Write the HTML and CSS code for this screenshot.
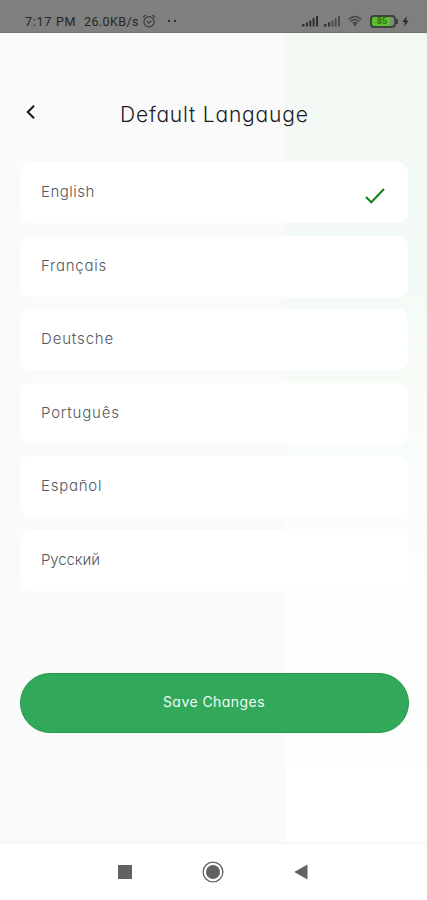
FILE: index.html
```html
<!DOCTYPE html>
<html lang="en">
<head>
	<meta charset="utf-8">
	<meta name="viewport" content="width=device-width, initial-scale=1">
	<title>Default Langauge</title>
	<link rel="stylesheet" href="styles.css">
</head>
<body>
<div class="app">
	<div class="status-bar">
		<span class="time">7:17 PM</span>
		<span class="speed">26.0KB/s</span>
		<svg class="alarm" width="14" height="14" viewBox="0 0 14 14" fill="none" stroke="#3c3c3c" stroke-width="1.2">
			<circle cx="7" cy="7.7" r="5.1"/>
			<path d="M1 3.3L3.7 1M13 3.3L10.3 1M4.8 7.2L6.8 9.2L9.4 6.6"/>
		</svg>
		<span class="dots"><i></i><i></i></span>
		<div class="status-icons">
			<svg width="17" height="12" viewBox="0 0 17 12" fill="#303030">
				<path d="M0 9h2.5v2.5H0zM4 7.5h2v4H4zM7.3 5.5h2v6h-2zM10.6 3.3h2v8.2h-2zM14 1h2v10.5h-2z"/>
			</svg>
			<svg class="signal2" width="17" height="12" viewBox="0 0 17 12" fill="#303030">
				<path d="M0 9h2.5v2.5H0zM4 7.5h2v4H4z"/>
				<path fill="#4d4d4d" d="M7.3 5.5h2v6h-2zM10.6 3.3h2v8.2h-2zM14 1h2v10.5h-2z"/>
			</svg>
			<svg class="wifi" width="14" height="12" viewBox="0 0 14 12" fill="none" stroke="#444" stroke-width="1.4">
				<path d="M.8 4.4Q7-1.5 13.2 4.4M2.8 6.5Q7 2.5 11.2 6.5M4.7 8.5Q7 6.4 9.3 8.5"/>
				<path fill="#444" stroke="none" d="M5.2 9L7 11.4L8.8 9Q7 7.8 5.2 9z"/>
			</svg>
			<div class="battery"><b>85</b></div>
			<svg class="bolt" width="7" height="11" viewBox="0 0 7 11" fill="#292929">
				<path d="M4.8 0L.4 6H3L1.8 11L6.7 4.6H4z"/>
			</svg>
		</div>
	</div>

	<div class="screen">
		<div class="header">
			<svg class="back" width="12" height="16" viewBox="0 0 12 16" fill="none" stroke="#17171d" stroke-width="2">
				<path d="M9 1.8L2.8 8L9 14.2"/>
			</svg>
			<h1>Default Langauge</h1>
		</div>

		<div class="lang-list">
			<div class="item">
				<span class="en">English</span>
				<svg class="check" width="20" height="18" viewBox="0 0 20 18" fill="none" stroke="#108018" stroke-width="2">
					<path d="M1 10L6.3 15.3L19 2"/>
				</svg>
			</div>
			<div class="item"><span class="fr">Français</span></div>
			<div class="item"><span class="de">Deutsche</span></div>
			<div class="item"><span class="pt">Português</span></div>
			<div class="item"><span class="es">Español</span></div>
			<div class="item"><span class="ru">Русский</span></div>
		</div>

		<button class="save-btn">Save Changes</button>
	</div>

	<div class="nav-bar">
		<svg width="16" height="16" viewBox="0 0 16 16">
			<path fill="#626262" d="M1 1h14v14H1z"/>
		</svg>
		<svg width="22" height="22" viewBox="0 0 22 22">
			<circle cx="11" cy="11" r="9.9" fill="none" stroke="#626262" stroke-width="1.3"/>
			<circle cx="11" cy="11" r="7" fill="#626262"/>
		</svg>
		<svg width="16" height="16" viewBox="0 0 16 16">
			<path fill="#626262" d="M14.5 .5v15L1.2 8z"/>
		</svg>
	</div>
</div>
</body>
</html>
```
FILE: styles.css
```css
* {
	margin: 0;
	padding: 0;
	box-sizing: border-box;
}

body {
	background: #fff;
	font-family: "Inter", sans-serif;
	font-feature-settings: "cv11";
}

.app {
	display: flex;
	flex-direction: column;
	width: 427px;
	height: 900px;
	overflow: hidden;
}

/* status bar */
.status-bar {
	display: flex;
	align-items: center;
	height: 33px;
	padding: 10px 18px 0 25px;
	background: #7f7f7f;
	border-bottom: 1px solid #747474;
	font-family: "Roboto", sans-serif;
	font-size: 12.5px;
	font-weight: 400;
	color: #262626;
	white-space: nowrap;
}

.status-bar .time {
	width: 59px;
	letter-spacing: 0.75px;
}

.status-bar .speed {
	width: 58px;
	letter-spacing: 0.4px;
}

.dots {
	display: flex;
	gap: 4px;
	margin-left: 12px;
}

.dots i {
	width: 2px;
	height: 2px;
	background: #303030;
}

.status-icons {
	display: flex;
	align-items: center;
	margin-left: auto;
}

.signal2 {
	margin-left: 5px;
}

.wifi {
	margin-left: 7px;
}

.battery {
	position: relative;
	width: 26px;
	height: 13px;
	margin-left: 8px;
	border: 2px solid #3d443b;
	border-radius: 4px;
	background: linear-gradient(to right, #5cc02f 80%, #7f8b79 80%);
	font-size: 9px;
	line-height: 9px;
	text-align: center;
	color: #2f7018;
}

.battery b {
	display: block;
	margin-right: 2px;
}

.battery::after {
	content: "";
	position: absolute;
	right: -4px;
	top: 2px;
	width: 2px;
	height: 5px;
	background: #3d443b;
}

.bolt {
	margin-left: 6px;
}

/* page */
.screen {
	flex: 1;
	padding: 0 19px 0 20px;
	background: linear-gradient(#f2f9f3 0, #f4faf5 250px, #f9fdf9 440px, #fdfefd 570px, #fdfefd 733px, #fff 736px) 285px 0 no-repeat #fafafa;
}

.header {
	display: flex;
	align-items: center;
	height: 129px;
	padding-top: 32px;
}

.back {
	margin: -3px 0 0 5px;
}

.header h1 {
	margin: 2px 0 0 83px;
	font-size: 21px;
	font-weight: 300;
	line-height: 30px;
	letter-spacing: 0.8px;
	color: #1b1b28;
	white-space: nowrap;
}

.lang-list {
	display: flex;
	flex-direction: column;
	gap: 12.5px;
}

.item {
	display: flex;
	justify-content: space-between;
	height: 61px;
	padding: 20px 23px 0 21px;
	border-radius: 10px;
	background: #fff;
	font-size: 15px;
	font-weight: 300;
	line-height: 20px;
	color: #555761;
}

.check {
	margin-top: 5px;
}

.en { letter-spacing: 0.5px; }
.fr { letter-spacing: 0.75px; }
.de { letter-spacing: 0.85px; }
.pt { letter-spacing: 0.8px; }
.es { letter-spacing: 0.75px; }
.ru { letter-spacing: -0.1px; }

.save-btn {
	display: block;
	width: 389px;
	height: 60px;
	margin: 82px 0 0 -0.5px;
	padding-bottom: 3px;
	border: 1px solid #249a4b;
	border-radius: 30px;
	background: #32a85a;
	font-family: inherit;
	font-feature-settings: inherit;
	font-size: 14px;
	letter-spacing: 0.45px;
	color: #f2faf4;
}

/* android buttons */
.nav-bar {
	display: flex;
	align-items: center;
	justify-content: space-between;
	height: 58px;
	padding: 0 118px 0 117px;
	border-top: 2px solid #f6f6f6;
	background: #fff;
}
```
